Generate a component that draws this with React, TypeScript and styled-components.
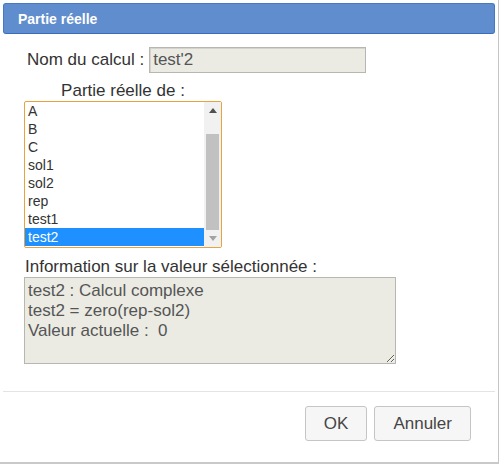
import styled, { createGlobalStyle } from "styled-components";

const GlobalStyle = createGlobalStyle`
    html, body {
        margin: 0;
        padding: 0;
        background: #ffffff;
    }
    body {
        font-family: "Liberation Sans", Arial, sans-serif;
    }
`;

const Dialog = styled.div`
    box-sizing: border-box;
    width: 499px;
    height: 464px;
    padding: 3px;
    background: #ffffff;
    border-right: 1px solid #c5c5c5;
    border-bottom: 2px solid #c9c9c9;
    display: flex;
    flex-direction: column;
    color: #333333;
`;

const TitleBar = styled.div`
    box-sizing: border-box;
    height: 31px;
    width: 492px;
    padding: 0 14px;
    display: flex;
    align-items: center;
    background: #5f8dcd;
    border: 1px solid #4679c4;
    border-bottom-color: #3a6dbd;
    border-radius: 3px;
    color: #ffffff;
    font-family: "Liberation Sans", Arial, sans-serif;
    font-weight: 700;
    font-size: 14px;
`;

const Content = styled.div`
    flex: 1;
    padding: 13px 0 0 21px;
    display: flex;
    flex-direction: column;
    align-items: flex-start;
`;

const NameRow = styled.div`
    display: flex;
    align-items: center;
    gap: 5px;
    padding-left: 3px;
`;

const Label = styled.span`
    font-size: 17px;
    line-height: 20px;
    color: #333333;
`;

const NameInput = styled.div`
    box-sizing: border-box;
    width: 217px;
    height: 26px;
    padding: 0 3px;
    display: flex;
    align-items: center;
    background: #ebebe4;
    border: 1px solid #b7b7b2;
    box-shadow: inset 1px 1px 0 #d4d4cf;
    font-size: 17px;
    color: #555555;
`;

const ListBlock = styled.div`
    margin-top: 8px;
    width: 198px;
    display: flex;
    flex-direction: column;
    align-items: center;
`;

const ListBox = styled.div`
    box-sizing: border-box;
    width: 198px;
    height: 147px;
    border: 1px solid #e8a33c;
    border-radius: 2px;
    display: flex;
    background: #ffffff;
`;

const Options = styled.div`
    flex: 1;
    padding-top: 0;
    display: flex;
    flex-direction: column;
`;

const Option = styled.div<{ $selected?: boolean }>`
    height: 18px;
    line-height: 18px;
    padding-left: 3px;
    font-size: 14px;
    color: ${(p) => (p.$selected ? "#ffffff" : "#333333")};
    background: ${(p) => (p.$selected ? "#1e90ff" : "transparent")};
`;

const Scrollbar = styled.div`
    width: 17px;
    background: #f1f1f1;
    display: flex;
    flex-direction: column;
`;

const ArrowButton = styled.div`
    height: 17px;
    display: flex;
    align-items: center;
    justify-content: center;
`;

const Track = styled.div`
    flex: 1;
    display: flex;
    flex-direction: column;
    padding: 15px 2px 0;
`;

const Thumb = styled.div`
    flex: 1;
    background: #c1c1c1;
`;

const InfoLabel = styled(Label)`
    margin-top: 9px;
    padding-left: 1px;
`;

const InfoArea = styled.textarea`
    box-sizing: border-box;
    margin-top: 0;
    width: 372px;
    height: 87px;
    padding: 3px 3px;
    background: #ebebe4;
    border: 1px solid #b7b7b2;
    font-family: "Liberation Sans", Arial, sans-serif;
    font-size: 17px;
    line-height: 20px;
    color: #555555;
    resize: both;
    outline: none;
    overflow: hidden;
`;

const ButtonPane = styled.div`
    box-sizing: border-box;
    height: 68px;
    width: 492px;
    border-top: 1px solid #e3e3e3;
    padding: 14px 24px 0 0;
    display: flex;
    justify-content: flex-end;
    align-items: flex-start;
    gap: 7px;
`;

const Button = styled.button`
    box-sizing: border-box;
    height: 35px;
    padding: 0 18px;
    background: #f6f6f6;
    border: 1px solid #c5c5c5;
    border-radius: 3px;
    font-family: "Liberation Sans", Arial, sans-serif;
    font-size: 17px;
    color: #454545;
`;

const items = ["A", "B", "C", "sol1", "sol2", "rep", "test1", "test2"];

const info = "test2 : Calcul complexe\ntest2 = zero(rep-sol2)\nValeur actuelle :  0";

function App() {
    return (
        <>
            <GlobalStyle />
            <Dialog>
                <TitleBar>Partie réelle</TitleBar>
                <Content>
                    <NameRow>
                        <Label>Nom du calcul :</Label>
                        <NameInput>test'2</NameInput>
                    </NameRow>
                    <ListBlock>
                        <Label>Partie réelle de :</Label>
                        <ListBox>
                            <Options>
                                {items.map((it) => (
                                    <Option key={it} $selected={it === "test2"}>
                                        {it}
                                    </Option>
                                ))}
                            </Options>
                            <Scrollbar>
                                <ArrowButton>
                                    <svg width="8" height="5" viewBox="0 0 8 5">
                                        <path d="M0 5 L4 0 L8 5 Z" fill="#505050" />
                                    </svg>
                                </ArrowButton>
                                <Track>
                                    <Thumb />
                                </Track>
                                <ArrowButton>
                                    <svg width="8" height="5" viewBox="0 0 8 5">
                                        <path d="M0 0 L8 0 L4 5 Z" fill="#a3a3a3" />
                                    </svg>
                                </ArrowButton>
                            </Scrollbar>
                        </ListBox>
                    </ListBlock>
                    <InfoLabel>Information sur la valeur sélectionnée :</InfoLabel>
                    <InfoArea readOnly value={info} />
                </Content>
                <ButtonPane>
                    <Button>OK</Button>
                    <Button>Annuler</Button>
                </ButtonPane>
            </Dialog>
        </>
    );
}

export default App;
